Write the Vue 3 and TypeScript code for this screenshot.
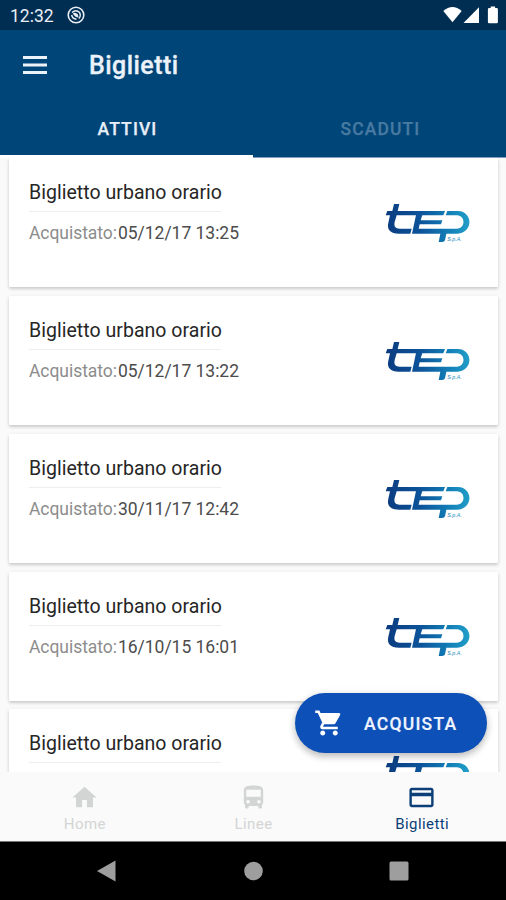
<script setup lang="ts">
interface Ticket {
  id: number
  name: string
  purchased?: string
}

const tickets: Ticket[] = [
  { id: 1, name: 'Biglietto urbano orario', purchased: '05/12/17 13:25' },
  { id: 2, name: 'Biglietto urbano orario', purchased: '05/12/17 13:22' },
  { id: 3, name: 'Biglietto urbano orario', purchased: '30/11/17 12:42' },
  { id: 4, name: 'Biglietto urbano orario', purchased: '16/10/15 16:01' },
  { id: 5, name: 'Biglietto urbano orario' },
]
</script>

<template>
  <div class="screen">
    <div class="status">
      <span class="clock">12:32</span>
      <svg class="notif" viewBox="0 0 18 18">
        <circle cx="9" cy="9" r="7.8" fill="none" stroke="currentColor" stroke-width="1.6" />
        <path d="M5 6.500Q9 3 12.600 6.600Q14.300 10 11.800 12.500M4.600 9Q5.500 13 9.500 13.200" fill="none" stroke="currentColor" stroke-width="1.4" />
        <path d="M5.800 7.200Q8.500 5.800 10.800 8.200L11.500 11.500Q8 11.500 5.800 7.200Z" fill="currentColor" />
      </svg>
      <svg class="signals" viewBox="0 0 56 18">
        <path d="M.3 5Q9.500-3.200 18.700 5L9.500 16.300Z" />
        <path d="M20.500 17L36 1.300V17Z" />
        <path d="M47.700 .5h4.400v1.600h1.500q1.300 0 1.300 1.300v12.600q0 1.300-1.300 1.300h-7.400q-1.300 0-1.300-1.300V3.400q0-1.300 1.300-1.300h1.500Z" />
      </svg>
    </div>

    <header class="appbar">
      <svg class="menu" viewBox="0 0 24 18"><path d="M0 0h24v3H0zM0 7.500h24v3H0zM0 15h24v3H0z" /></svg>
      <h1>Biglietti</h1>
    </header>
    <nav class="tabs">
      <div class="tab active"><span>ATTIVI</span></div>
      <div class="tab"><span>SCADUTI</span></div>
    </nav>

    <main class="list">
      <article v-for="ticket in tickets" :key="ticket.id" class="card">
        <div class="info">
          <h2>{{ ticket.name }}</h2>
          <p v-if="ticket.purchased"><span class="label">Acquistato:</span><span class="date">{{ ticket.purchased }}</span></p>
        </div>
        <svg class="logo" viewBox="45 40 260 125">
          <defs>
            <linearGradient :id="'tep' + ticket.id" gradientUnits="userSpaceOnUse" x1="50" y1="0" x2="300" y2="0">
              <stop offset="0" stop-color="#0b3c80" />
              <stop offset=".4" stop-color="#0c5399" />
              <stop offset=".75" stop-color="#127fb7" />
              <stop offset="1" stop-color="#229fc8" />
            </linearGradient>
          </defs>
          <g :fill="`url(#tep${ticket.id})`">
            <path d="M72 43H88L83 64H225L220 77H80L74 97C71 111 77 117 89 117H125L121 132H87C61 132 50 119 55 99L60 77H47L52 64H67Z" />
            <path d="M138 76H157L152 92H217L213 104H149L146 117H260C287 116 287 78 261 77H227L232 64H264C311 66 309 131 262 132H229L225 152Q223 157 217 157H206L211 132H126Z" />
          </g>
          <text v-if="ticket.purchased" x="232" y="153" :fill="`url(#tep${ticket.id})`">S.p.A.</text>
        </svg>
      </article>

      <button class="buy" type="button">
        <svg viewBox="0 0 24 24"><path d="M7 18c-1.100 0-2 .9-2 2s.9 2 2 2 2-.9 2-2-.9-2-2-2zM1 2v2h2l3.600 7.600-1.400 2.500C4.500 15.400 5.500 17 7 17h12v-2H7.400c-.1 0-.2-.1-.2-.2l.9-1.800h7.500c.7 0 1.400-.4 1.700-1l3.600-6.500C21.300 4.800 20.800 4 20 4H5.200L4.300 2H1zm16 16c-1.100 0-2 .9-2 2s.9 2 2 2 2-.9 2-2-.9-2-2-2z" /></svg>
        <span>ACQUISTA</span>
      </button>
    </main>

    <nav class="bottom">
      <div class="item">
        <svg viewBox="0 0 24 24"><path d="M10 20v-6h4v6h5v-8h3L12 3 2 12h3v8z" /></svg>
        <span>Home</span>
      </div>
      <div class="item">
        <svg viewBox="0 0 24 24"><path fill-rule="evenodd" d="M4 16c0 .9.4 1.700 1 2.200V20c0 .6.4 1 1 1h1c.6 0 1-.4 1-1v-1h8v1c0 .6.4 1 1 1h1c.6 0 1-.4 1-1v-1.800c.6-.5 1-1.300 1-2.200V6c0-3.500-3.600-4-8-4s-8 .5-8 4v10zm3.500 1a1.500 1.500 0 1 1 0-3 1.500 1.500 0 0 1 0 3zm9 0a1.500 1.500 0 1 1 0-3 1.500 1.500 0 0 1 0 3zM18 11.300H6V5.500h12v5.800z" /></svg>
        <span>Linee</span>
      </div>
      <div class="item selected">
        <svg viewBox="0 0 24 24"><path fill-rule="evenodd" d="M20 4H4c-1.110 0-2 .89-2 2v12c0 1.110.89 2 2 2h16c1.110 0 2-.89 2-2V6c0-1.110-.89-2-2-2zm0 14H4v-7h16v7zm0-10H4V6h16v2z" /></svg>
        <span>Biglietti</span>
      </div>
    </nav>

    <div class="system">
      <svg viewBox="0 0 20 22"><path d="M0 11L18.500 .5V21.500Z" /></svg>
      <svg viewBox="0 0 20 22"><circle cx="10.500" cy="11" r="9.300" /></svg>
      <svg viewBox="0 0 20 22"><rect x=".5" y="1.500" width="19" height="19" rx="1.500" /></svg>
    </div>
  </div>
</template>

<style>
body {
  margin: 0;
}
</style>

<style scoped>
.screen {
  width: 506px;
  height: 900px;
  display: flex;
  flex-direction: column;
  overflow: hidden;
  background: #fafafa;
  font-family: Roboto, "Liberation Sans", sans-serif;
}
.status {
  flex: none;
  height: 30px;
  box-sizing: border-box;
  padding: 0 7px 0 10px;
  display: flex;
  align-items: center;
  background: #002e52;
  color: #e9eef5;
}
.clock {
  width: 57px;
  padding-top: 2px;
  font-size: 17.5px;
  line-height: 20px;
}
.notif {
  width: 18px;
  height: 18px;
}
.signals {
  width: 56px;
  height: 18px;
  margin-left: auto;
  fill: #fff;
}
.appbar {
  flex: none;
  height: 71px;
  display: flex;
  align-items: center;
  padding-left: 23px;
  background: #004577;
  color: #ecf2fa;
}
.menu {
  width: 24px;
  height: 18px;
  margin-bottom: 2px;
  fill: currentColor;
}
h1 {
  margin: 1px 0 0 42px;
  font-size: 25px;
  line-height: 30px;
  font-weight: 500;
  letter-spacing: .45px;
  -webkit-text-stroke: .3px currentColor;
}
.tabs {
  flex: none;
  height: 57px;
  display: flex;
  background: #004577;
}
.tab {
  flex: 1;
  display: flex;
  align-items: center;
  justify-content: center;
  box-sizing: border-box;
  padding-left: 2px;
  border-bottom: 1px solid #7f9fbc;
  color: #487aa2;
  font-size: 17.5px;
  font-weight: 500;
  letter-spacing: 1.1px;
  -webkit-text-stroke: .25px currentColor;
}
.tab.active {
  border-bottom: 3px solid #fff;
  color: #e8eef7;
}
.tab.active span {
  padding-top: 2px;
}
.list {
  position: relative;
  flex: none;
  height: 614px;
  overflow: hidden;
}
.card {
  height: 129px;
  margin: 0 8px 8.850px 9px;
  box-sizing: border-box;
  padding: 22px 26px 0 20px;
  display: flex;
  align-items: flex-start;
  justify-content: space-between;
  border-radius: 1px;
  background: #fff;
  box-shadow: 0 2px 3px rgba(0, 0, 0, .14), 0 1px 5px rgba(0, 0, 0, .08);
}
h2 {
  width: 192px;
  height: 31px;
  margin: 0;
  border-bottom: 1px solid #eee;
  white-space: nowrap;
  color: #262626;
  font-size: 19.500px;
  line-height: 26px;
  font-weight: 400;
  letter-spacing: .03px;
}
.info p {
  margin: 8px 0 0;
  display: flex;
  white-space: nowrap;
  font-size: 17.500px;
  line-height: 26px;
}
.label {
  width: 89px;
  color: #8c8c8c;
  letter-spacing: -.05px;
}
.date {
  color: #4c4c4c;
  letter-spacing: -.03px;
}
.logo {
  width: 86.700px;
  height: 41.700px;
  margin-top: 23.300px;
}
.logo text {
  font: italic 400 16px "Liberation Sans", sans-serif;
}
.buy {
  position: absolute;
  left: 295px;
  top: 535px;
  width: 192px;
  height: 60px;
  box-sizing: border-box;
  padding: 0 0 0 19px;
  display: flex;
  align-items: center;
  border: 0;
  border-radius: 30px;
  background: #0d50b7;
  color: #eff4ff;
  box-shadow: 0 4px 7px rgba(0, 0, 0, .2), 0 1px 9px rgba(0, 0, 0, .1);
  font: 500 17.500px/24px Roboto, sans-serif;
  letter-spacing: 1.250px;
  -webkit-text-stroke: .2px currentColor;
}
.buy span {
  padding-top: 1px;
}
.buy svg {
  width: 30px;
  height: 30px;
  margin-right: 20px;
  fill: #fff;
}
.bottom {
  flex: none;
  height: 69px;
  border-bottom: 1px solid #777;
  display: flex;
  background: #fafafa;
}
.item {
  flex: 1;
  display: flex;
  flex-direction: column;
  align-items: center;
  padding-top: 11px;
  color: #d3d5d5;
  font-size: 15px;
  line-height: 18px;
  letter-spacing: .42px;
}
.item span {
  padding-left: 1px;
}
.item svg {
  width: 29px;
  height: 29px;
  margin-bottom: 3px;
  fill: currentColor;
}
.item.selected {
  color: #0c3f78;
}
.system {
  flex: 1;
  display: flex;
  align-items: center;
  justify-content: center;
  gap: 126px;
  background: #000;
}
.system svg {
  width: 20px;
  height: 22px;
  fill: #9e9e9e;
}
</style>
